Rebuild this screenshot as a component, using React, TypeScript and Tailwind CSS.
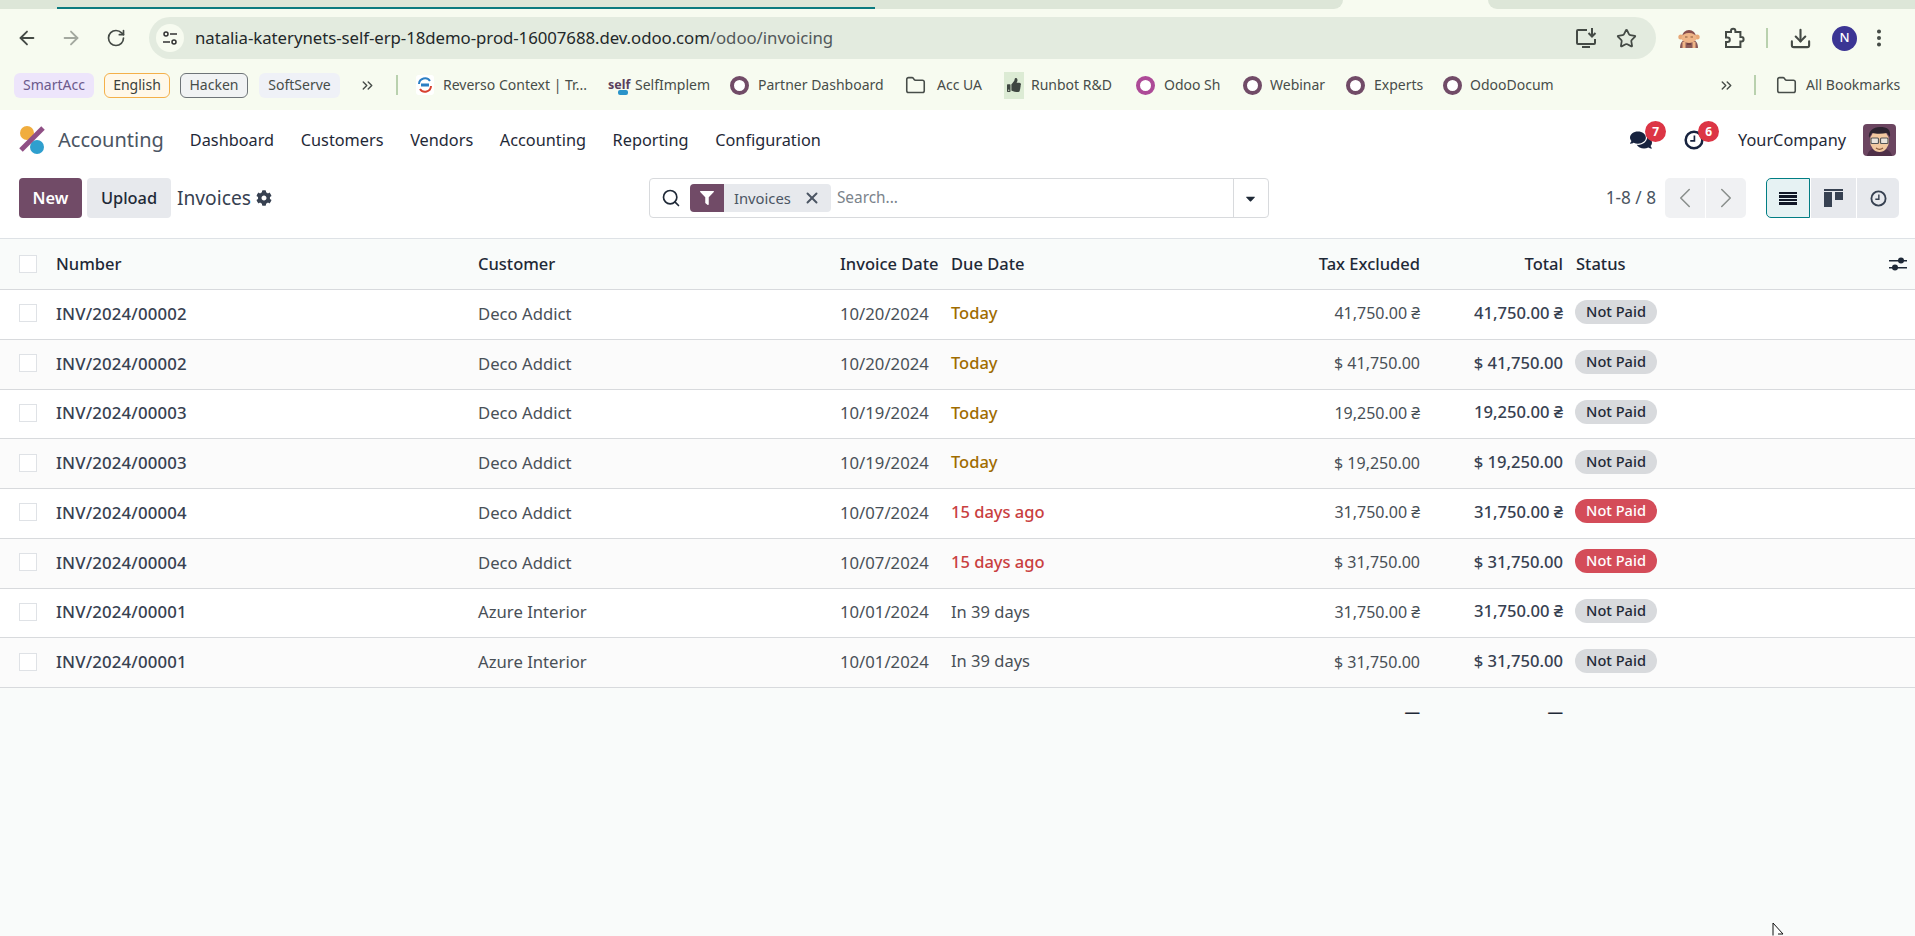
import { ArrowLeft, ArrowRight, RotateCw, Star, Download, EllipsisVertical, Folder, ChevronsRight, ChevronLeft, ChevronRight, Search, X } from "lucide-react";
import { FaCog, FaFilter, FaComments, FaCaretDown, FaThumbsUp } from "react-icons/fa";

const ROWS = [
  { number: "INV/2024/00002", customer: "Deco Addict", invoiceDate: "10/20/2024", due: "Today", dueKind: "warn", tax: "41,750.00 ₴", total: "41,750.00 ₴", late: false },
  { number: "INV/2024/00002", customer: "Deco Addict", invoiceDate: "10/20/2024", due: "Today", dueKind: "warn", tax: "$ 41,750.00", total: "$ 41,750.00", late: false },
  { number: "INV/2024/00003", customer: "Deco Addict", invoiceDate: "10/19/2024", due: "Today", dueKind: "warn", tax: "19,250.00 ₴", total: "19,250.00 ₴", late: false },
  { number: "INV/2024/00003", customer: "Deco Addict", invoiceDate: "10/19/2024", due: "Today", dueKind: "warn", tax: "$ 19,250.00", total: "$ 19,250.00", late: false },
  { number: "INV/2024/00004", customer: "Deco Addict", invoiceDate: "10/07/2024", due: "15 days ago", dueKind: "late", tax: "31,750.00 ₴", total: "31,750.00 ₴", late: true },
  { number: "INV/2024/00004", customer: "Deco Addict", invoiceDate: "10/07/2024", due: "15 days ago", dueKind: "late", tax: "$ 31,750.00", total: "$ 31,750.00", late: true },
  { number: "INV/2024/00001", customer: "Azure Interior", invoiceDate: "10/01/2024", due: "In 39 days", dueKind: "none", tax: "31,750.00 ₴", total: "31,750.00 ₴", late: false },
  { number: "INV/2024/00001", customer: "Azure Interior", invoiceDate: "10/01/2024", due: "In 39 days", dueKind: "none", tax: "$ 31,750.00", total: "$ 31,750.00", late: false },
];

const MENU = ["Dashboard", "Customers", "Vendors", "Accounting", "Reporting", "Configuration"];

const COLS = "grid grid-cols-[46px_422px_362px_111px_359px_130px_143px_1fr] items-center";

function OdooRing({ color = "#714b67" }: { color?: string }) {
  return <span className="block h-[19px] w-[19px] shrink-0 rounded-full border-[4px] bg-white" style={{ borderColor: color }} />;
}

function MonkeyIcon() {
  return (
    <svg width="22" height="22" viewBox="0 0 22 22" className="shrink-0">
      <path d="M2 21c0-6 3-9 9-9s9 3 9 9z" fill="#8a5a58" />
      <path d="M4 10a7 7 0 0 1 14 0z" fill="#8a4f4c" />
      <ellipse cx="2.800" cy="10" rx="2.500" ry="2.500" fill="#e8a877" />
      <ellipse cx="19.200" cy="10" rx="2.500" ry="2.500" fill="#e8a877" />
      <ellipse cx="11" cy="11" rx="7.500" ry="5" fill="#efb487" />
      <path d="M6 21v-6M16 21v-6" stroke="#efb487" strokeWidth="3" />
      <path d="M9 17h4" stroke="#6b3a38" strokeWidth="1.500" />
      <path d="M7 10h2.500M12.500 10H15" stroke="#8a5a3a" strokeWidth="1" />
    </svg>
  );
}

function Avatar() {
  return (
    <svg width="33" height="32" viewBox="0 0 33 32" className="shrink-0 rounded-[4px]">
      <rect width="33" height="32" fill="#6b4560" />
      <path d="M4 32c1-6 6-8 12-8s12 2 13 8z" fill="#4f3048" />
      <ellipse cx="16.500" cy="17" rx="9.500" ry="11" fill="#f2c9a0" />
      <path d="M6 14c-1-7 4-11 11-11s11 2 10 10l-3-4c-5 1-11 1-15 0z" fill="#2d2430" />
      <rect x="8" y="14" width="7.500" height="5.500" rx="1" fill="#e9e4dc" stroke="#565656" strokeWidth="1.200" />
      <rect x="17.500" y="14" width="7.500" height="5.500" rx="1" fill="#e9e4dc" stroke="#565656" strokeWidth="1.200" />
      <path d="M13 24c2 1.500 5 1.500 7 0" stroke="#8a5a3a" strokeWidth="1.200" fill="none" />
    </svg>
  );
}

function ClockIcon({ size, stroke }: { size: number; stroke: number }) {
  return (
    <svg width={size} height={size} viewBox="0 0 24 24" fill="none" stroke="currentColor">
      <circle cx="12" cy="12" r="10" strokeWidth={stroke} />
      <path d="M12.500 6.500v6.500H7.500" strokeWidth="2" />
    </svg>
  );
}

function Badge({ value, className }: { value: string; className: string }) {
  return (
    <span className={`absolute flex h-[21px] w-[21px] items-center justify-center rounded-full bg-[#dc3545] text-[12px] font-bold text-white ${className}`}>
      {value}
    </span>
  );
}

function BrowserChrome() {
  return (
    <div className="h-[110px] bg-[#f7fbf0] text-[#444a45]">
      {/* tab strip */}
      <div className="flex h-[9px]">
        <div className="relative h-[9px] w-[1343px] rounded-br-[10px] bg-[#dde6d8]">
          <div className="absolute left-[57px] top-[7px] h-[2px] w-[818px] bg-[#0b7b80]" />
        </div>
        <div className="w-[145px]" />
        <div className="flex-1 rounded-bl-[10px] bg-[#dde6d8]" />
      </div>

      {/* address row */}
      <div className="flex h-[42px] items-center pt-[8px] box-content">
        <ArrowLeft className="ml-[16px] h-[22px] w-[22px]" strokeWidth={2} />
        <ArrowRight className="ml-[22px] h-[22px] w-[22px] text-[#a3a89f]" strokeWidth={2} />
        <RotateCw className="ml-[24px] h-[20px] w-[20px]" strokeWidth={2} />
        <div className="ml-[23px] flex h-[42px] w-[1507px] items-center rounded-full bg-[#e3ebdf]">
          <span className="ml-[7px] flex h-[28px] w-[28px] items-center justify-center rounded-full bg-[#f7fbf0]">
            <svg width="16" height="16" viewBox="0 0 16 16" fill="none" stroke="#333" strokeWidth="1.500">
              <circle cx="4" cy="4" r="2" />
              <path d="M8 4h7M1 12h7" />
              <circle cx="12" cy="12" r="2" />
            </svg>
          </span>
          <span className="ml-[11px] whitespace-nowrap text-[16.8px] tracking-[-0.05px] text-[#23282a]">
            natalia-katerynets-self-erp-18demo-prod-16007688.dev.odoo.com<span className="text-[#52585a]">/odoo/invoicing</span>
          </span>
          <svg width="22" height="22" viewBox="0 0 22 22" fill="none" stroke="#444a45" strokeWidth="2" className="ml-auto">
            <path d="M12 3H3a1 1 0 0 0-1 1v12a1 1 0 0 0 1 1h16a1 1 0 0 0 1-1v-4" />
            <path d="M7 20h8M17 1v8M13.500 6l3.500 3.500L20.500 6" />
          </svg>
          <Star className="ml-[19px] mr-[19px] h-[21px] w-[21px]" strokeWidth={2} />
        </div>
        <span className="ml-[22px]"><MonkeyIcon /></span>
        <svg width="22" height="22" viewBox="0 0 22 22" fill="none" stroke="#444a45" strokeWidth="2" className="ml-[23px]">
          <path d="M3 5h5V4a2.200 2.200 0 0 1 4.400 0v1h5v5h1a2 2 0 0 1 0 4.400h-1V20H3v-5h1.500a2.300 2.300 0 0 0 0-4.600H3z" />
        </svg>
        <span className="ml-[21px] h-[20px] w-[2px] bg-[#b9d1ae]" />
        <Download className="ml-[21px] h-[23px] w-[23px]" strokeWidth={2.2} />
        <span className="ml-[20px] flex h-[25px] w-[25px] items-center justify-center rounded-full bg-[#3b3594] text-[13px] font-medium text-white">N</span>
        <EllipsisVertical className="ml-[11px] h-[22px] w-[22px]" strokeWidth={2.4} />
      </div>

      {/* bookmarks row */}
      <div className="mt-[13px] flex h-[26px] items-center text-[14px] leading-none text-[#474d49]">
        <span className="ml-[14px] flex h-[25px] w-[80px] items-center justify-center rounded-[6px] bg-[#ede5fb] text-[#6b5a8c]">SmartAcc</span>
        <span className="ml-[10px] flex h-[25px] w-[66px] items-center justify-center rounded-[6px] border border-[#f4b04a] bg-[#fff8e9] text-[#3b3f3c]">English</span>
        <span className="ml-[10px] flex h-[25px] w-[68px] items-center justify-center rounded-[6px] border border-[#6e7478] bg-[#f1f3f4]">Hacken</span>
        <span className="ml-[11px] flex h-[25px] w-[81px] items-center justify-center rounded-[6px] bg-[#eff1f7]">SoftServe</span>
        <ChevronsRight className="ml-[19px] h-[17px] w-[17px]" strokeWidth={2} />
        <span className="ml-[20px] h-[20px] w-[2px] bg-[#b9d1ae]" />
        <svg width="18" height="20" viewBox="0 0 18 20" fill="none" strokeWidth="2" className="ml-[18px] shrink-0 rounded-[3px] bg-white">
          <path d="M3 9a6 6 0 0 1 11-3" stroke="#2b7fc4" />
          <path d="M15 11a6 6 0 0 1-11 3" stroke="#d8402f" />
          <rect x="5" y="8.500" width="8" height="3" fill="#2b7fc4" stroke="none" />
        </svg>
        <span className="ml-[9px] w-[143px] whitespace-nowrap">Reverso Context | Tr...</span>
        <span className="relative ml-[22px] w-[21px] text-[12.5px] font-bold leading-[10px] text-[#5b3f5c]">
          self
          <span className="absolute left-[10px] top-[10px] h-[5px] w-[10px] rounded-[2px] bg-[#2a93c9]" />
        </span>
        <span className="ml-[6px] w-[97px] whitespace-nowrap">SelfImplem</span>
        <span className="ml-[-2px]"><OdooRing /></span>
        <span className="ml-[9px] w-[123px] whitespace-nowrap">Partner Dashboard</span>
        <Folder className="ml-[24px] h-[21px] w-[21px]" strokeWidth={1.8} />
        <span className="ml-[11px] w-[46px] whitespace-nowrap">Acc UA</span>
        <span className="ml-[21px] flex h-[27px] w-[20px] items-center justify-center bg-[#dcebd4]"><FaThumbsUp className="h-[14px] w-[14px] text-[#3f4641]" /></span>
        <span className="ml-[7px] w-[84px] whitespace-nowrap">Runbot R&amp;D</span>
        <span className="ml-[21px]"><OdooRing color="#ad4a97" /></span>
        <span className="ml-[9px] w-[57px] whitespace-nowrap">Odoo Sh</span>
        <span className="ml-[22px]"><OdooRing /></span>
        <span className="ml-[8px] w-[55px] whitespace-nowrap">Webinar</span>
        <span className="ml-[21px]"><OdooRing /></span>
        <span className="ml-[9px] w-[47px] whitespace-nowrap">Experts</span>
        <span className="ml-[22px]"><OdooRing /></span>
        <span className="ml-[8px] w-[85px] whitespace-nowrap">OdooDocum</span>
        <ChevronsRight className="ml-[163px] h-[17px] w-[17px]" strokeWidth={2} />
        <span className="ml-[19px] h-[20px] w-[2px] bg-[#b9d1ae]" />
        <Folder className="ml-[20px] h-[21px] w-[21px]" strokeWidth={1.8} />
        <span className="ml-[9px] whitespace-nowrap">All Bookmarks</span>
      </div>
    </div>
  );
}

function Navbar() {
  return (
    <div className="flex h-[60px] items-center text-[#1f2937]">
      <svg width="28" height="30" viewBox="0 0 28 30" className="ml-[18px] shrink-0">
        <circle cx="9" cy="8" r="7" fill="#f0ad3e" />
        <circle cx="19" cy="22" r="7" fill="#2f9fce" />
        <path d="M3 25L25 3" stroke="#8f4f85" strokeWidth="5" />
      </svg>
      <span className="ml-[12px] text-[20px] text-[#4b5563]">Accounting</span>
      <nav className="ml-[26px] flex gap-[26.6px] text-[16.3px]">
        {MENU.map((item) => (
          <span key={item}>{item}</span>
        ))}
      </nav>
      <div className="relative ml-auto flex h-[32px] items-center">
        <span className="relative flex h-[32px] w-[28px] items-center justify-center">
          <FaComments className="h-[22px] w-[22px] text-[#17233f]" />
          <Badge value="7" className="left-[18px] top-[-3px]" />
        </span>
        <span className="relative ml-[28px] flex h-[32px] w-[22px] items-center justify-center text-[#17233f]">
          <ClockIcon size={20} stroke={3} />
          <Badge value="6" className="left-[15px] top-[-3px]" />
        </span>
        <span className="ml-[33px] text-[16.3px]">YourCompany</span>
        <span className="ml-[17px] mr-[19px]"><Avatar /></span>
      </div>
    </div>
  );
}

function ControlPanel() {
  return (
    <div className="flex h-[69px] items-start border-b border-[#dee2e6] pt-[8px] text-[#374151]">
      <button className="ml-[19px] h-[40px] w-[63px] rounded-[4px] bg-[#714b67] text-[16.4px] font-semibold text-white">New</button>
      <button className="ml-[5px] h-[40px] w-[84px] rounded-[4px] bg-[#e7e9ed] text-[16.4px] font-medium text-[#1f2937]">Upload</button>
      <span className="ml-[6px] flex h-[40px] items-center text-[19.2px] text-[#374151]">Invoices</span>
      <FaCog className="ml-[5px] mt-[12px] h-[16px] w-[16px] text-[#374151]" />

      <div className="ml-[377px] flex h-[40px] w-[620px] items-center rounded-[4px] border border-[#d8dadd] bg-white">
        <Search className="ml-[11px] h-[20px] w-[20px] text-[#1f2937]" strokeWidth={2} />
        <span className="ml-[9px] flex h-[28px] w-[34px] items-center justify-center rounded-l-[4px] bg-[#714b67]">
          <FaFilter className="h-[14px] w-[14px] text-white" />
        </span>
        <span className="flex h-[28px] w-[107px] items-center rounded-r-[4px] bg-[#e7e9ed] pl-[10px] text-[14.8px] text-[#4b5563]">
          Invoices
          <X className="ml-[12px] h-[18px] w-[18px] text-[#4b5563]" strokeWidth={2.6} />
        </span>
        <span className="ml-[6px] text-[15.4px] text-[#7b838b]">Search...</span>
        <span className="ml-auto flex h-full w-[35px] items-center justify-center border-l border-[#d8dadd]">
          <FaCaretDown className="h-[15px] w-[15px] text-[#1f2937]" />
        </span>
      </div>

      <span className="ml-auto flex h-[40px] items-center text-[17.2px] text-[#4b5563]">1-8 / 8</span>
      <div className="ml-[9px] flex h-[40px] gap-px">
        <span className="flex w-[40px] items-center justify-center rounded-l-[5px] bg-[#f0f1f3]"><ChevronLeft className="h-[34px] w-[34px] text-[#8a8f8c]" strokeWidth={1.1} /></span>
        <span className="flex w-[40px] items-center justify-center rounded-r-[5px] bg-[#f0f1f3]"><ChevronRight className="h-[34px] w-[34px] text-[#8a8f8c]" strokeWidth={1.1} /></span>
      </div>
      <div className="ml-[20px] mr-[16px] flex h-[40px] gap-px">
        <span className="flex w-[44px] flex-col items-center justify-center gap-[1px] rounded-l-[5px] border border-[#017e84] bg-[#e6f2f3]">
          <i className="block h-[2.5px] w-[18px] bg-[#111827]" />
          <i className="block h-[2.5px] w-[18px] bg-[#111827]" />
          <i className="block h-[2.5px] w-[18px] bg-[#111827]" />
          <i className="block h-[2.5px] w-[18px] bg-[#111827]" />
        </span>
        <span className="flex w-[45px] items-center justify-center bg-[#e7e9ed]">
          <svg width="19" height="18" viewBox="0 0 19 18" fill="#374151">
            <rect width="19" height="2" />
            <rect y="3" width="8" height="15" />
            <rect x="11" y="3" width="8" height="8" />
          </svg>
        </span>
        <span className="flex w-[42px] items-center justify-center rounded-r-[5px] bg-[#e7e9ed] text-[#374151]">
          <ClockIcon size={17} stroke={2.6} />
        </span>
      </div>
    </div>
  );
}

function Checkbox() {
  return <span className="ml-[19px] block h-[18px] w-[18px] border border-[#dfe2e6] bg-white" />;
}

function InvoiceTable() {
  return (
    <div className="text-[16.5px] text-[#495057]">
      <div className={`${COLS} h-[51px] border-b border-[#d8dadd] bg-[#f9fbfa] font-medium text-[#1f2937]`}>
        <Checkbox />
        <span className="pl-[10px]">Number</span>
        <span className="pl-[10px]">Customer</span>
        <span className="whitespace-nowrap pl-[10px]">Invoice Date</span>
        <span className="pl-[10px]">Due Date</span>
        <span className="pr-[10px] text-right">Tax Excluded</span>
        <span className="pr-[10px] text-right">Total</span>
        <span className="relative pl-[3px]">
          Status
          <svg width="18" height="14" viewBox="0 0 18 14" className="absolute right-[8px] top-[5px] text-[#1f2937]" fill="currentColor">
            <path d="M0 3h18v1.400H0zM0 10h18v1.400H0z" />
            <circle cx="12" cy="3.500" r="3" />
            <circle cx="6" cy="10.500" r="3" />
          </svg>
        </span>
      </div>
      {ROWS.map((row, i) => (
        <div key={i} className={`${COLS} h-[49.75px] border-b border-[#d8dadd] pb-[2px] ${i % 2 === 0 ? "bg-white" : "bg-[#fbfbfb]"}`}>
          <Checkbox />
          <span className="pl-[10px] text-[16.8px] font-medium tracking-[0.15px] text-[#374151]">{row.number}</span>
          <span className="pl-[10px] text-[16.7px]">{row.customer}</span>
          <span className="pl-[10px] text-[16.7px]">{row.invoiceDate}</span>
          <span className={`pl-[10px] ${row.dueKind === "warn" ? "font-medium text-[#a06c00]" : row.dueKind === "late" ? "font-medium text-[#c9403f]" : ""}`}>{row.due}</span>
          <span className="pr-[10px] text-right text-[16px]">{row.tax}</span>
          <span className="pr-[10px] text-right text-[16.6px] font-medium text-[#374151]">{row.total}</span>
          <span className="pb-[3px]">
            <span className={`ml-[2px] inline-flex h-[24px] w-[82px] items-center justify-center rounded-full text-[14.6px] font-medium ${row.late ? "bg-[#d44c59] text-white" : "bg-[#d8dadd] text-[#1f2937]"}`}>
              Not Paid
            </span>
          </span>
        </div>
      ))}
      <div className={`${COLS} h-[50px] font-semibold text-[#1f2937]`}>
        <span />
        <span />
        <span />
        <span />
        <span />
        <span className="pr-[10px] text-right text-[15.6px]">—</span>
        <span className="pr-[10px] text-right text-[15.6px]">—</span>
        <span />
      </div>
    </div>
  );
}

export default function App() {
  return (
    <div className="relative h-[936px] w-[1915px] overflow-hidden bg-[#f9fbfa] font-['Noto_Sans',sans-serif]">
      <BrowserChrome />
      <div className="bg-white">
        <Navbar />
        <ControlPanel />
      </div>
      <InvoiceTable />
      {/* mouse pointer left in the capture */}
      <svg width="14" height="14" viewBox="0 0 14 14" className="absolute left-[1772px] top-[922px]" fill="#fff" stroke="#111" strokeWidth="1">
        <path d="M1 1v12.500M1 1l10 11H6" />
      </svg>
    </div>
  );
}
